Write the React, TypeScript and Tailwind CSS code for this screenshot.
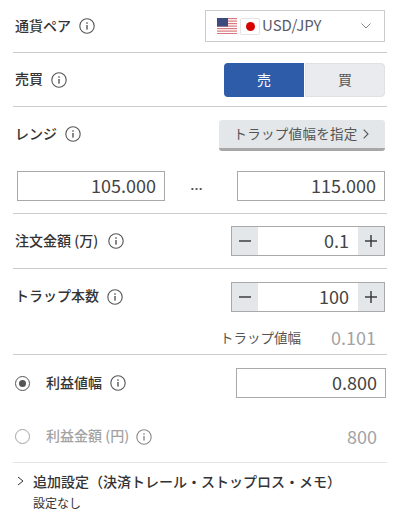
import type { ReactNode } from "react";

function InfoIcon({ muted = false }: { muted?: boolean }) {
  const color = muted ? "#8a8a8a" : "#555555";
  return (
    <svg width="16" height="16" viewBox="0 0 16 16" fill="none" className="shrink-0">
      <circle cx="8" cy="8" r="7.2" stroke={color} strokeWidth="1.1" />
      <rect x="7.3" y="7" width="1.4" height="4.6" fill={color} />
      <rect x="7.3" y="4.3" width="1.4" height="1.5" fill={color} />
    </svg>
  );
}

function UsFlag() {
  return (
    <svg width="20" height="16" viewBox="0 0 20 16" className="shrink-0">
      <rect width="20" height="16" fill="#ffffff" />
      {[0, 2.5, 5, 7.5, 10, 12.5, 15].map((y) => (
        <rect key={y} x="0" y={y} width="20" height="1.2" fill="#d9787f" />
      ))}
      <rect width="11" height="8.5" fill="#3c4a7d" />
    </svg>
  );
}

function JpFlag() {
  return (
    <div className="flex h-[17px] w-[20px] shrink-0 items-center justify-center rounded-[2px] border border-[#e4e4e4] bg-white">
      <div className="h-[9px] w-[9px] rounded-full bg-[#d60000]" />
    </div>
  );
}

function Label({ children, gap = "ml-[8px]" }: { children: ReactNode; gap?: string }) {
  return (
    <div className="flex items-center">
      <span className="pb-[3px] text-[14px] font-medium leading-none text-[#333333]">{children}</span>
      <span className={gap}>
        <InfoIcon />
      </span>
    </div>
  );
}

function Stepper({ value }: { value: string }) {
  return (
    <div className="flex h-[30px] w-[154px] border border-[#a9a9a9] bg-white">
      <div className="flex w-[26px] items-center justify-center bg-[#e4e7ea]">
        <svg width="12" height="12" viewBox="0 0 12 12">
          <rect x="0" y="5.3" width="12" height="1.4" fill="#333333" />
        </svg>
      </div>
      <div className="flex flex-1 items-center justify-end pb-[1px] pr-[9px] text-[18px] text-[#444444]">{value}</div>
      <div className="flex w-[26px] items-center justify-center bg-[#e4e7ea]">
        <svg width="12" height="12" viewBox="0 0 12 12">
          <rect x="0" y="5.3" width="12" height="1.4" fill="#333333" />
          <rect x="5.3" y="0" width="1.4" height="12" fill="#333333" />
        </svg>
      </div>
    </div>
  );
}

function NumberBox({ value, width = "w-[148px]" }: { value: string; width?: string }) {
  return (
    <div className={`flex h-[30px] ${width} items-center justify-end border border-[#a9a9a9] bg-white pb-[1px] pr-[8px] text-[18px] text-[#444444]`}>
      {value}
    </div>
  );
}

export default function App() {
  return (
    <div
      className="h-[520px] w-[400px] overflow-hidden bg-white px-[13px]"
      style={{ fontFamily: '"Noto Sans CJK JP", "Liberation Sans", sans-serif' }}
    >
      <div className="flex h-[53px] items-center justify-between border-b border-[#cccccc] px-[2px]">
        <Label>通貨ペア</Label>
        <div className="flex h-[32px] w-[180px] items-center border border-[#cccccc] pl-[11px] pr-[13px]">
          <UsFlag />
          <div className="ml-[3px]">
            <JpFlag />
          </div>
          <span className="ml-[2px] pb-[1px] text-[15px] text-[#5a5a68]">USD/JPY</span>
          <svg width="10" height="6" viewBox="0 0 10 6" fill="none" className="ml-auto">
            <path d="M0.5 0.5 L5 5 L9.5 0.5" stroke="#888888" strokeWidth="1" />
          </svg>
        </div>
      </div>

      <div className="flex h-[54px] items-center justify-between border-b border-[#cccccc] px-[2px]">
        <Label>売買</Label>
        <div className="flex h-[34px] w-[161px] text-[14px]">
          <div className="flex w-[80px] items-center justify-center rounded-l-[4px] bg-[#2f5ca8] text-white">売</div>
          <div className="ml-[1px] flex flex-1 items-center justify-center rounded-r-[4px] border border-[#dfe2e5] bg-[#e9ebee] text-[#555555]">
            買
          </div>
        </div>
      </div>

      <div className="border-b border-[#cccccc]">
        <div className="flex h-[64px] items-start justify-between px-[2px] pt-[13px]">
          <div className="flex h-[28px] items-center">
            <Label>レンジ</Label>
          </div>
          <div className="flex h-[31px] w-[166px] items-center justify-center rounded-[3px] border-b-[3px] border-[#a8a8a8] bg-[#e4e7ea] pb-[1px] pr-[2px] text-[13.5px] tracking-[0.3px] text-[#555555]">
            トラップ値幅を指定
            <svg width="6" height="10" viewBox="0 0 6 10" fill="none" className="ml-[5px]">
              <path d="M0.7 0.7 L5 5 L0.7 9.3" stroke="#555555" strokeWidth="1.1" />
            </svg>
          </div>
        </div>
        <div className="flex h-[42px] items-start justify-between pl-[4px] pr-[2px]">
          <NumberBox value="105.000" />
          <span
            className="mr-[9px] h-[30px] text-[13px] font-bold leading-[30px] text-[#555555]"
            style={{ fontFamily: '"Liberation Sans", sans-serif' }}
          >
            …
          </span>
          <NumberBox value="115.000" />
        </div>
      </div>

      <div className="flex h-[55px] items-center justify-between border-b border-[#cccccc] px-[2px]">
        <Label gap="ml-[10px]">注文金額 (万)</Label>
        <Stepper value="0.1" />
      </div>

      <div className="border-b border-[#cccccc]">
        <div className="flex h-[55px] items-center justify-between px-[2px]">
          <Label>トラップ本数</Label>
          <Stepper value="100" />
        </div>
        <div className="flex h-[30px] items-center justify-end pb-[3px] pr-[11px]">
          <span className="text-[13.5px] text-[#555555]">トラップ値幅</span>
          <span className="ml-[30px] text-[18px] text-[#a3a3a3]">0.101</span>
        </div>
      </div>

      <div className="border-b border-[#e4e4e4]">
        <div className="flex h-[58px] items-start justify-between pl-[2px] pr-[1px] pt-[13px]">
          <div className="flex h-[30px] items-center">
            <div className="flex h-[15px] w-[15px] items-center justify-center rounded-full border-[1.5px] border-[#555555]">
              <div className="h-[7px] w-[7px] rounded-full bg-[#555555]" />
            </div>
            <div className="ml-[16px]">
              <Label>利益値幅</Label>
            </div>
          </div>
          <NumberBox value="0.800" width="w-[150px]" />
        </div>
        <div className="flex h-[49px] items-center justify-between pb-[2px] pl-[2px] pr-[10px]">
          <div className="flex items-center">
            <div className="h-[15px] w-[15px] rounded-full border border-[#a3a3a3]" />
            <span className="ml-[16px] pb-[3px] text-[14px] font-medium leading-none text-[#a3a3a3]">利益金額 (円)</span>
            <span className="ml-[7px]">
              <InfoIcon muted />
            </span>
          </div>
          <span className="pb-[1px] text-[18px] text-[#a3a3a3]">800</span>
        </div>
      </div>

      <div className="pl-[4px] pt-[8px]">
        <div className="flex items-center">
          <svg width="7" height="10" viewBox="0 0 7 10" fill="none" className="shrink-0">
            <path d="M1 1 L6 5 L1 9" stroke="#333333" strokeWidth="1" />
          </svg>
          <span className="ml-[9px] text-[14px] font-medium leading-[20px] text-[#333333]">
            追加設定（決済トレール・ストップロス・メモ）
          </span>
        </div>
        <div className="ml-[16px] mt-[4px] text-[12px] leading-[16px] text-[#333333]">設定なし</div>
      </div>
    </div>
  );
}
